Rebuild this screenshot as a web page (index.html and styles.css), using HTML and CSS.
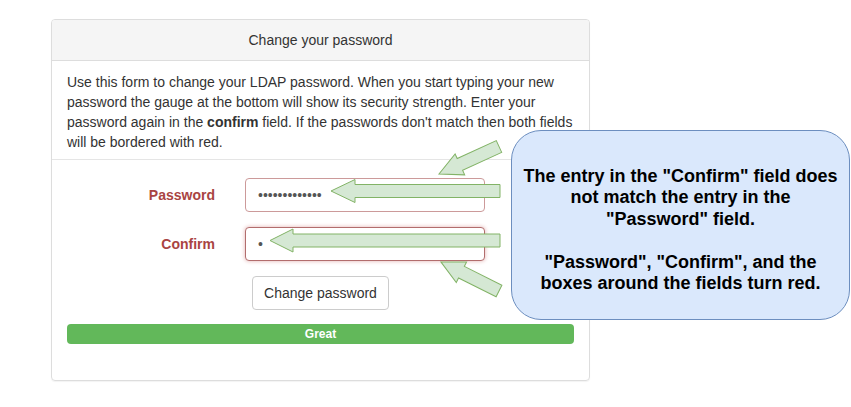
FILE: index.html
```html
<!DOCTYPE html>
<html lang="en">
<head>
  <meta charset="UTF-8">
  <title>Change your password</title>
  <link rel="stylesheet" href="styles.css">
</head>
<body>

<div class="page">
  <div class="panel">
    <div class="panel-heading">Change your password</div>

    <div class="intro">
      <p>Use this form to change your LDAP password. When you start typing your new
      password the gauge at the bottom will show its security strength. Enter your
      password again in the <b>confirm</b> field. If the passwords don't match then both fields
      will be bordered with red.</p>
    </div>

    <form class="pw-form">
      <div class="form-row has-error">
        <label for="pw">Password</label>
        <input id="pw" type="password" value="secretpasswd1">
      </div>
      <div class="form-row has-error">
        <label for="pw2">Confirm</label>
        <input id="pw2" class="focused" type="password" value="s">
      </div>
      <div class="actions">
        <button type="button" class="btn">Change password</button>
      </div>
      <div class="progress">Great</div>
    </form>
  </div>

  <!-- annotation arrows -->
  <svg class="arrows" width="851" height="407" viewBox="0 0 851 407">
    <g fill="#d5e8d4" stroke="#82b366" stroke-width="1">
      <polygon transform="translate(499 146.5) rotate(155.4)"
        points="0,-6.5 43,-6.5 43,-11.5 66,0 43,11.5 43,6.5 0,6.5"/>
      <polygon points="500,184.5 355,184.5 355,179.5 331,191 355,202.5 355,197.5 500,197.5"/>
      <polygon points="500,234 293,234 293,229 270,240.5 293,252 293,247 500,247"/>
      <polygon transform="translate(499 291) rotate(206.6)"
        points="0,-6.5 42,-6.5 42,-11.5 65,0 42,11.5 42,6.5 0,6.5"/>
    </g>
  </svg>

  <div class="callout">
    <p>The entry in the "Confirm" field does<br>
    not match the entry in the<br>
    "Password" field.<br>
    <br>
    "Password", "Confirm", and the<br>
    boxes around the fields turn red.</p>
  </div>
</div>

</body>
</html>
```

FILE: styles.css
```css
body {
  margin: 0;
  font-family: "Liberation Sans", Arial, sans-serif;
  color: #333;
  background: #fff;
}

.page {
  position: relative;
  width: 851px;
  height: 407px;
  padding: 19px 0 0 51px;
  box-sizing: border-box;
  overflow: hidden;
}

.panel {
  width: 539px;
  box-sizing: border-box;
  border: 1px solid #ddd;
  border-radius: 4px;
  box-shadow: 0 1px 1px rgba(0,0,0,0.05);
}

.panel-heading {
  background: #f5f5f5;
  border-bottom: 1px solid #ddd;
  border-radius: 3px 3px 0 0;
  padding: 10px 15px;
  text-align: center;
  font-size: 14px;
  line-height: 20px;
}

.intro {
  padding: 11px 15px 7px;
  border-bottom: 1px solid #e5e5e5;
}

.intro p {
  margin: 0;
  font-size: 14px;
  line-height: 20px;
}

.pw-form {
  margin: 0;
  padding: 18px 15px 36px;
}

.form-row {
  display: flex;
  align-items: center;
  margin-bottom: 15px;
}

.form-row label {
  width: 148px;
  margin-right: 30px;
  text-align: right;
  font-size: 14px;
  font-weight: bold;
  color: #a94442;
}

.form-row input {
  width: 240px;
  height: 34px;
  box-sizing: border-box;
  padding: 6px 12px;
  font-family: "Liberation Sans", Arial, sans-serif;
  font-size: 14px;
  color: #555;
  background: #fff;
  border: 1px solid #cc9a9a;
  border-radius: 4px;
  outline: none;
}

.form-row input.focused {
  border-color: #b26d6d;
  box-shadow: 0 0 4px #e2b0b0;
}

.actions {
  display: flex;
  justify-content: center;
  margin-bottom: 14px;
}

.btn {
  font-family: "Liberation Sans", Arial, sans-serif;
  font-size: 14px;
  line-height: 20px;
  padding: 6px 11px;
  color: #333;
  background: #fff;
  border: 1px solid #ccc;
  border-radius: 4px;
}

.progress {
  height: 20px;
  line-height: 20px;
  background: #62b85a;
  border-radius: 4px;
  color: #fff;
  font-size: 12px;
  font-weight: bold;
  text-align: center;
}

/* annotation overlay */
.arrows {
  position: absolute;
  top: 0;
  left: 0;
  pointer-events: none;
}

.callout {
  position: absolute;
  left: 511px;
  top: 130px;
  width: 339px;
  height: 190px;
  box-sizing: border-box;
  padding-top: 10px;
  display: flex;
  align-items: center;
  justify-content: center;
  background: #dae8fc;
  border: 1px solid #6c8ebf;
  border-radius: 30px;
}

.callout p {
  margin: 0;
  text-align: center;
  font-size: 18px;
  line-height: 21.5px;
  font-weight: bold;
  color: #000;
  white-space: nowrap;
}
```
